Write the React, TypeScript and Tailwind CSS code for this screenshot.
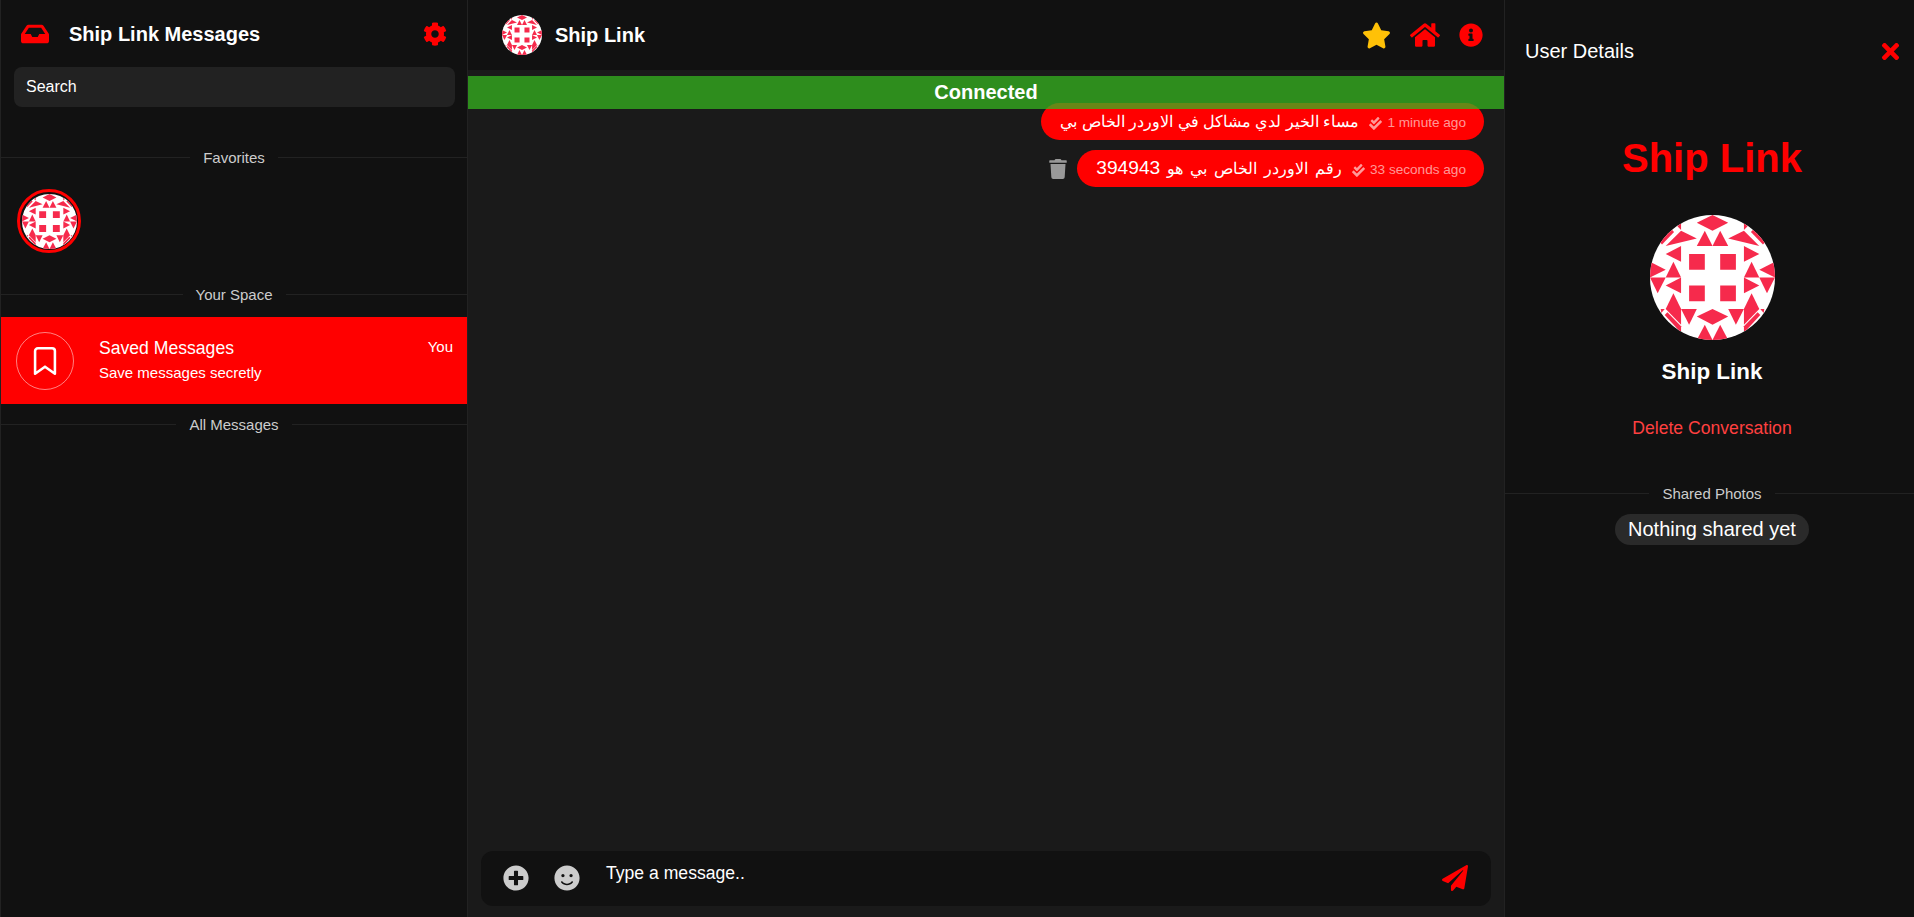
import {
  FaCheckDouble,
  FaCog,
  FaHome,
  FaInbox,
  FaInfoCircle,
  FaPaperPlane,
  FaPlusCircle,
  FaSmile,
  FaStar,
  FaTimes,
  FaTrash,
} from "react-icons/fa";
import { FiBookmark } from "react-icons/fi";
import type { ReactNode } from "react";

// identicon tiles, in the coordinates of the viewBox below
const avatarShapes = [
  "265,162 312,162 312,209 265,209",
  "358,162 405,162 405,209 358,209",
  "265,256 312,256 312,303 265,303",
  "358,256 405,256 405,303 358,303",
  "288,68 335,45 382,68 335,92",
  "288,349 335,326 382,349 335,373",
  "288,138 312,92 335,138",
  "335,138 358,92 382,138",
  "288,419 312,373 335,419",
  "335,419 358,373 382,419",
  "241,92 288,115 195,138",
  "429,92 382,115 475,138",
  "195,162 241,138 241,185",
  "475,162 429,138 429,185",
  "195,256 241,232 241,279",
  "475,256 429,232 429,279",
  "195,232 218,185 241,232",
  "429,232 452,185 475,232",
  "148,185 195,209 148,232",
  "522,185 475,209 522,232",
  "148,232 195,232 171,279",
  "522,232 475,232 498,279",
  "218,279 241,326 241,373 195,326",
  "452,279 429,326 429,373 475,326",
  "241,326 288,326 265,373",
  "429,326 382,326 405,373",
  "241,68 241,90 230,79",
  "429,68 429,90 440,79",
  "212,88 220,96 184,133 176,125",
  "458,88 450,96 486,133 494,125",
  "180,326 192,326 182,338",
  "490,326 478,326 488,338",
  "192,344 200,336 241,378 241,392 236,392",
  "478,344 470,336 429,378 429,392 434,392",
];

const Avatar = ({ className }: { className: string }) => (
  <svg viewBox="148 45 374 374" className={className}>
    <defs>
      <clipPath id="avatar-clip">
        <circle cx="335" cy="232" r="187" />
      </clipPath>
    </defs>
    <g clipPath="url(#avatar-clip)">
      <rect x="148" y="45" width="374" height="374" fill="#fff" />
      {avatarShapes.map((p) => (
        <polygon key={p} points={p} fill="#f62a4c" />
      ))}
    </g>
  </svg>
);

const Divider = ({ label, className }: { label: string; className: string }) => (
  <div className={`flex items-center gap-[13px] text-[15px] text-[#ccc] ${className}`}>
    <div className="mb-[2px] h-px flex-1 bg-[#222]" />
    <span className="leading-4">{label}</span>
    <div className="mb-[2px] h-px flex-1 bg-[#222]" />
  </div>
);

const Sidebar = () => (
  <aside className="flex h-full w-[468px] shrink-0 flex-col border-x border-[#222] bg-[#111]">
    <div className="flex h-[67px] items-center justify-between pl-5 pr-[20px]">
      <div className="flex items-center gap-[20px]">
        <FaInbox size={28} className="text-[#f00]" />
        <h1 className="text-xl font-bold text-white">Ship Link Messages</h1>
      </div>
      <FaCog size={24} className="text-[#f00]" />
    </div>
    <div className="ml-[13px] mr-[12px] flex h-10 items-center rounded-lg bg-[#222] px-3 text-base text-white">
      Search
    </div>

    <Divider label="Favorites" className="mt-[43px]" />
    <div className="ml-4 mt-[23px] flex h-[64px] w-[64px] items-center justify-center rounded-full border-[3px] border-[#f00] bg-[#111]">
      <Avatar className="h-[55px] w-[55px]" />
    </div>

    <Divider label="Your Space" className="mt-[34px]" />
    <div className="mt-[14px] flex h-[87px] items-center bg-[#f00] pl-[15px] pr-[14px] text-white">
      <div className="flex h-[58px] w-[58px] shrink-0 items-center justify-center rounded-full border border-white/50">
        <FiBookmark size={34} strokeWidth={1.8} />
      </div>
      <div className="ml-[25px] flex-1 pb-[2px]">
        <div className="text-[17.6px] leading-[22px]">Saved Messages</div>
        <div className="mt-[5px] text-[15px] leading-[18px]">Save messages secretly</div>
      </div>
      <div className="mb-[26px] self-center text-[15px]">You</div>
    </div>

    <Divider label="All Messages" className="mt-[13px]" />
  </aside>
);

const Bubble = ({ children, time }: { children: ReactNode; time: string }) => (
  <div className="flex h-[37px] items-center gap-[10px] rounded-full bg-[#f00] pl-[19px] pr-[18px] text-white">
    <span className="text-base leading-5">{children}</span>
    <span className="flex items-center gap-[5px] pt-[4px] text-[13.6px] text-white/60">
      <FaCheckDouble size={13} />
      {time}
    </span>
  </div>
);

const Chat = () => (
  <main className="flex h-full w-[1036px] shrink-0 flex-col bg-[#1a1a1a]">
    <header className="flex h-[70px] shrink-0 items-center justify-between bg-[#111] pl-[34px] pr-[21px]">
      <div className="flex items-center gap-[13px]">
        <Avatar className="h-10 w-10" />
        <span className="text-xl font-bold text-white">Ship Link</span>
      </div>
      <div className="flex items-center gap-[19px]">
        <FaStar size={29} className="text-[#ffc107]" />
        <FaHome size={30} className="text-[#f00]" />
        <FaInfoCircle size={24} className="text-[#f00]" />
      </div>
    </header>

    <div className="relative flex min-h-0 flex-1 flex-col">
      <div className="absolute left-0 right-0 top-[6px] flex h-[33px] items-center justify-center bg-[#35b41f]/75 pb-px text-xl font-bold text-white">
        Connected
      </div>
      <div className="flex flex-1 flex-col items-end gap-[10px] pr-5 pt-[33px]">
        <Bubble time="1 minute ago">مساء الخير لدي مشاكل في الاوردر الخاص بي</Bubble>
        <div className="flex items-center gap-[9px]">
          <FaTrash size={20} className="text-[#999]" />
          <Bubble time="33 seconds ago">
            <span className="[word-spacing:2.5px]">
              رقم الاوردر الخاص بي هو <span className="text-[19.2px]">394943</span>
            </span>
          </Bubble>
        </div>
      </div>
      <div className="mx-[13px] mb-[11px] flex h-[55px] items-start rounded-xl bg-[#111] pl-[22px] pr-[23px] pt-[14px]">
        <FaPlusCircle size={26} className="text-[#ccc]" />
        <FaSmile size={26} className="ml-[25px] text-[#ccc]" />
        <span className="ml-[26px] text-[17.6px] leading-4 text-white">Type a message..</span>
        <FaPaperPlane size={26} className="ml-auto text-[#f00]" />
      </div>
    </div>
  </main>
);

// wider than what is left of the window: its right edge runs off the page
const Details = () => (
  <aside className="flex h-full w-[415px] shrink-0 flex-col border-l border-[#222] bg-[#111]">
    <div className="flex h-[102px] items-center justify-between pl-5 pr-[16px]">
      <span className="text-xl text-white">User Details</span>
      <FaTimes size={25} className="text-[#f00]" />
    </div>
    <div className="flex flex-col items-center">
      <h2 className="mt-[31px] text-[40px] font-bold leading-[50px] text-[#f00]">Ship Link</h2>
      <Avatar className="mt-[32px] h-[125px] w-[125px]" />
      <div className="mt-[20px] text-[22.4px] font-bold leading-6 text-white">Ship Link</div>
      <div className="mt-[33px] text-[17.6px] leading-[22px] text-[#ff4040]">Delete Conversation</div>
    </div>
    <Divider label="Shared Photos" className="mt-[47px]" />
    <div className="mt-[12px] self-center rounded-full bg-[#2a2a2a] px-[13px] py-[3px] text-xl leading-[25px] text-white">
      Nothing shared yet
    </div>
  </aside>
);

export default function App() {
  return (
    <div className="flex h-screen w-full overflow-hidden bg-[#111] [font-family:'Liberation_Sans',Arial,sans-serif]">
      <Sidebar />
      <Chat />
      <Details />
    </div>
  );
}
